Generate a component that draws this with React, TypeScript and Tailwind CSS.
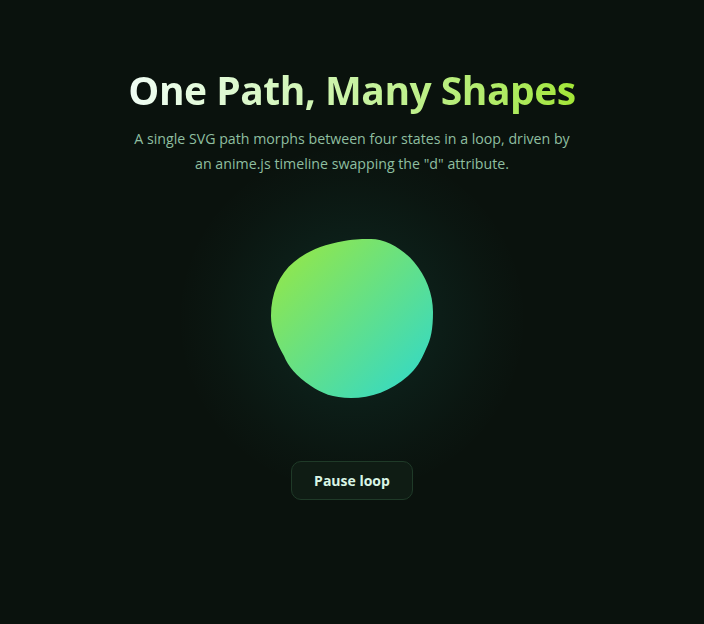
import { useState } from 'react';

export default function App() {
  const [playing, setPlaying] = useState(true);

  return (
    <div
      className="min-h-[624px] w-full bg-[#0a120d] flex flex-col items-center pt-[66px]"
      style={{ fontFamily: '"Open Sans", "Noto Sans", sans-serif' }}
    >
      <h1 className="text-[39px] leading-[48px] font-bold tracking-[-0.5px] bg-gradient-to-r from-[#f0fdf4] to-[#a3e635] bg-clip-text text-transparent">
        One Path, Many Shapes
      </h1>
      <p className="mt-[12px] w-[450px] text-center text-[14.2px] leading-[25px] text-[#8fbfa0]">
        A single SVG path morphs between four states in a loop, driven by an anime.js timeline swapping the "d" attribute.
      </p>

      {/* Stage */}
      <div className="relative mt-[9px] w-[340px] h-[268px] flex items-center justify-center">
        <div className="absolute left-1/2 top-1/2 -translate-x-1/2 -translate-y-1/2 w-[350px] h-[350px] rounded-full bg-[radial-gradient(circle_closest-side,rgba(45,212,191,0.15)_0%,rgba(45,212,191,0.07)_40%,rgba(45,212,191,0.02)_80%,rgba(10,18,13,0)_100%)]" />
        <svg width="162" height="160" viewBox="0 0 162 160" className="relative">
          <defs>
            <linearGradient id="blob" x1="0" y1="0" x2="1" y2="1">
              <stop offset="0%" stopColor="#9be83f" />
              <stop offset="100%" stopColor="#2dd8cf" />
            </linearGradient>
          </defs>
          <path
            fill="url(#blob)"
            d="M0,77 C0,55 8,35 23,23 C35,13 50,6 73,2 C85,0 92,0 100,0 C115,0 132,10 143,23 C155,37 162,55 162,73 C162,90 160,100 155,110 C150,122 145,130 137,137 C120,152 100,159 80,159 C62,159 50,154 40,147 C25,137 17,127 13,117 C5,103 0,90 0,77 Z"
          />
        </svg>
      </div>

      <button
        onClick={() => setPlaying(!playing)}
        className="relative mt-[8px] h-[39px] px-[22px] rounded-[10px] border border-[#1f3a28] bg-[#0f1c14] text-[14px] font-bold text-[#d9f5e5]"
      >
        {playing ? 'Pause loop' : 'Play loop'}
      </button>
    </div>
  );
}
